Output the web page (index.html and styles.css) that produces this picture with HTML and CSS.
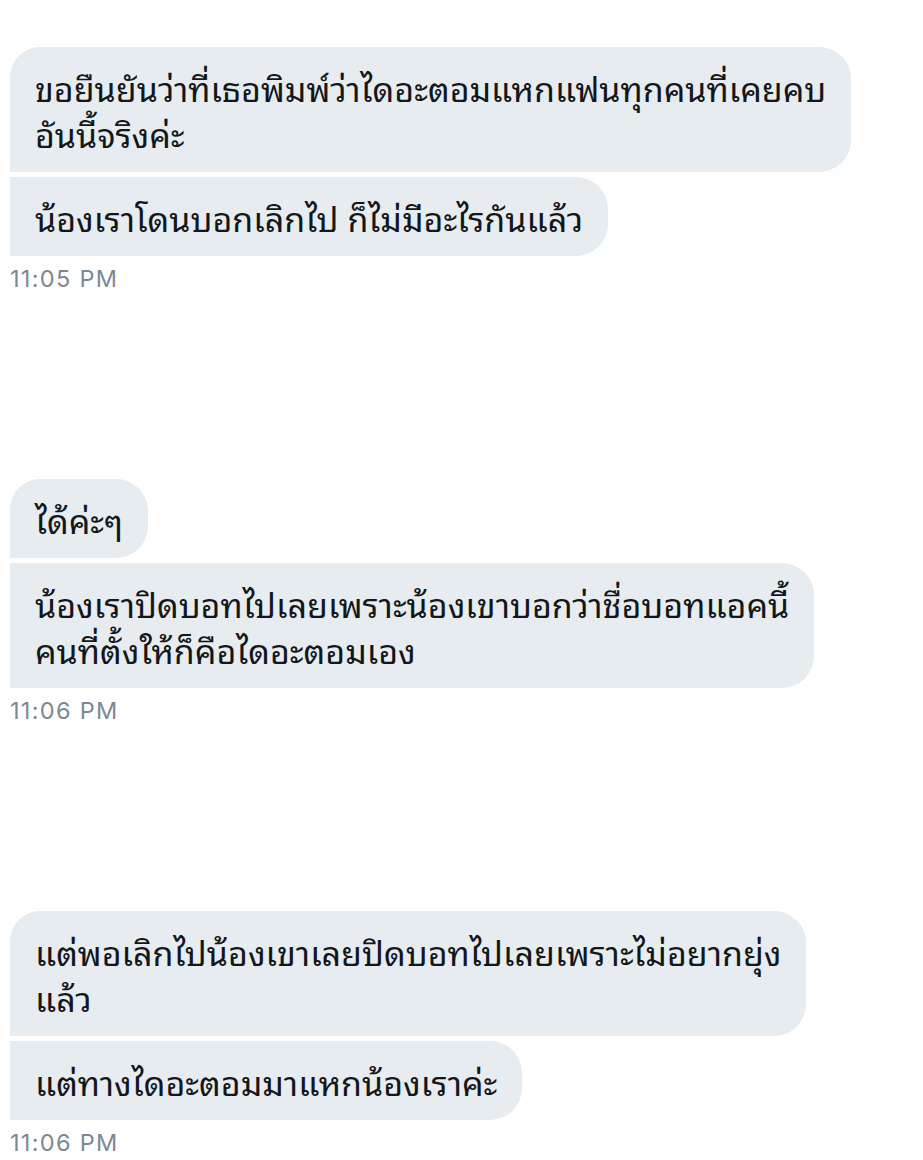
FILE: index.html
```html
<!DOCTYPE html>
<html lang="th">
<head>
<meta charset="utf-8">
<title>Messages</title>
<link rel="stylesheet" href="styles.css">
</head>
<body>
<main class="thread">
  <section class="group">
    <div class="bubble first">ขอยืนยันว่าที่เธอพิมพ์ว่าไดอะตอมแหกแฟนทุกคนที่เคยคบ<br>อันนี้จริงค่ะ</div>
    <div class="bubble">น้องเราโดนบอกเลิกไป ก็ไม่มีอะไรกันแล้ว</div>
    <div class="time">11:05 PM</div>
  </section>
  <section class="group">
    <div class="bubble first">ได้ค่ะๆ</div>
    <div class="bubble">น้องเราปิดบอทไปเลยเพราะน้องเขาบอกว่าชื่อบอทแอคนี้<br>คนที่ตั้งให้ก็คือไดอะตอมเอง</div>
    <div class="time">11:06 PM</div>
  </section>
  <section class="group">
    <div class="bubble first">แต่พอเลิกไปน้องเขาเลยปิดบอทไปเลยเพราะไม่อยากยุ่ง<br>แล้ว</div>
    <div class="bubble">แต่ทางไดอะตอมมาแหกน้องเราค่ะ</div>
    <div class="time">11:06 PM</div>
  </section>
</main>
</body>
</html>
```

FILE: styles.css
```css
html, body {
  margin: 0;
  padding: 0;
  background: #ffffff;
}

.thread {
  padding: 47px 0 0 10px;
  display: flex;
  flex-direction: column;
  gap: 186px;
}

.group {
  display: flex;
  flex-direction: column;
  align-items: flex-start;
  gap: 5px;
}

.bubble {
  background: #e6ecf0;
  color: #14171a;
  font-family: "Noto Sans Thai Looped", "Noto Looped Thai", "Thonburi", "Garuda", "Loma", "Noto Sans Thai", "Noto Sans", sans-serif;
  font-size: 34px;
  line-height: 46px;
  padding: 16.5px 25px;
  white-space: nowrap;
  border-radius: 0 32px 32px 0;
}

.bubble.first {
  border-top-left-radius: 30px;
}

.time {
  margin-top: 4px;
  font-family: "Inter", "Liberation Sans", Arial, sans-serif;
  font-size: 23.5px;
  letter-spacing: 1.3px;
  line-height: 28px;
  color: #7b8894;
}
```
